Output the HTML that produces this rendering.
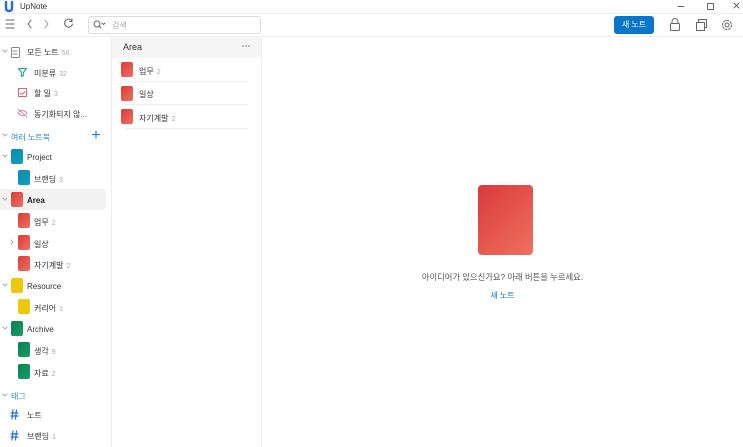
<!DOCTYPE html><html><head><meta charset="utf-8"><style>
*{margin:0;padding:0;box-sizing:border-box}
body{width:743px;height:447px;overflow:hidden;background:#fff;font-family:"Liberation Sans","Noto Sans CJK KR",sans-serif;font-size:8px;color:#333;position:relative}
.a{position:absolute}
.n{color:#aaa;font-size:7px;margin-left:3px}
.bk{position:absolute;width:12px;height:15px;border-radius:2px}
.r{background:linear-gradient(135deg,#d93a3a,#f07060)}
.b{background:linear-gradient(135deg,#0a89a8,#12a0c0)}
.y{background:#eec80c}
.g{background:linear-gradient(135deg,#0a8050,#13a068)}
.t{position:absolute;font-size:8px}
svg{position:absolute}
</style></head><body>
<svg style="left:0;top:0" width="743" height="447" fill="none" stroke-linecap="round" stroke-linejoin="round">
<path d="M6 2v6q0 3 3 3t3-3V2" stroke="#2a6fd8" stroke-width="2.5"/>
<path d="M678 6.5h6" stroke="#666"/><rect x="707.5" y="3.5" width="6" height="6" stroke="#666"/><path d="M734 3l5 5M739 3l-5 5" stroke="#666"/>
<path d="M6 20h8M6 24h8M6 28h8" stroke="#666"/>
<path d="M31 20l-3 4 3 4" stroke="#666"/><path d="M45 20l3 4-3 4" stroke="#999"/>
<path d="M72 21a4 4 0 1 0 0.5 3M72 19v2.5h-2.5" stroke="#666"/>
<circle cx="97" cy="24" r="3" stroke="#666"/><path d="M99 26l2 2M102 23l1.5 1.5 1.5-1.5" stroke="#666"/>
<rect x="670.5" y="23.5" width="9" height="7" rx="1" stroke="#666"/><path d="M672 23.5v-2a3 3 0 0 1 6 0v2" stroke="#666"/>
<rect x="698.5" y="19.5" width="8" height="8" stroke="#666"/><rect x="696.5" y="22.5" width="8" height="8" stroke="#666" fill="#fff"/>
<circle cx="727" cy="25" r="2" stroke="#666"/><circle cx="727" cy="25" r="4.5" stroke="#666" stroke-dasharray="2 1.5"/>
<g stroke="#aaa"><path d="M3 50l2 2 2-2M3 134l2 2 2-2M3 155l2 2 2-2M3 198l2 2 2-2M3 284l2 2 2-2M3 327l2 2 2-2M3 394l2 2 2-2M11 240l2 2-2 2"/></g>
<rect x="11.5" y="47.5" width="8" height="10" rx="1" stroke="#888"/><path d="M13 51h4M13 54h4" stroke="#888"/>
<path d="M18.5 68.5h8l-3 4v3l-2 1v-4z" stroke="#2aa89a" stroke-width="1.2"/>
<rect x="18.5" y="88.5" width="8" height="8" stroke="#d66"/><path d="M20 93l2 1.5 3-3" stroke="#d66"/>
<path d="M18 113q4-5 9 0q-4 5-9 0M18 109l9 8" stroke="#c8a"/>
<path d="M96 131v7M92.5 134.5h7" stroke="#2a86c8" stroke-width="1.2"/>
<g stroke="#2a6fd8" stroke-width="1.2"><path d="M11 413h7M11 416h7M13 410l-1 9M16.5 410l-1 9M11 434h7M11 437h7M13 431l-1 9M16.5 431l-1 9"/></g>
<circle cx="243" cy="46" r=".7" fill="#666"/><circle cx="246" cy="46" r=".7" fill="#666"/><circle cx="249" cy="46" r=".7" fill="#666"/>
</svg>
<div class="t" style="left:20px;top:2px">UpNote</div>
<div class="a" style="left:0;top:13px;width:743px;height:1px;background:#eee"></div>
<div class="a" style="left:88px;top:16px;width:173px;height:18px;border:1px solid #ddd;border-radius:3px"></div>
<div class="t" style="left:112px;top:20px;color:#aaa">검색</div>
<div class="a" style="left:614px;top:16px;width:40px;height:18px;background:#0a76c8;border-radius:3px;color:#fff;font-size:8px;text-align:center;line-height:18px">새 노트</div>
<div class="a" style="left:0;top:36px;width:743px;height:1px;background:#eee"></div>
<div class="a" style="left:111px;top:37px;width:1px;height:410px;background:#eee"></div>
<div class="a" style="left:261px;top:37px;width:1px;height:410px;background:#eee"></div>
<div class="t" style="left:27px;top:47px">모든 노트<span class="n">56</span></div>
<div class="t" style="left:34px;top:68px">미분류<span class="n">32</span></div>
<div class="t" style="left:34px;top:88px">할 일<span class="n">3</span></div>
<div class="t" style="left:34px;top:109px">동기화되지 않...</div>
<div class="t" style="left:11px;top:132px;color:#2a86c8">여러 노트북</div>
<div class="bk b" style="left:11px;top:149px"></div><div class="t" style="left:27px;top:153px">Project</div>
<div class="bk b" style="left:18px;top:170px"></div><div class="t" style="left:34px;top:174px">브랜딩<span class="n">3</span></div>
<div class="a" style="left:0;top:189px;width:106px;height:21px;background:#f2f2f2;border-radius:0 4px 4px 0"></div>
<svg style="left:0;top:189px" width="10" height="21" fill="none"><path d="M3 9l2 2 2-2" stroke="#aaa"/></svg>
<div class="bk r" style="left:11px;top:192px"></div><div class="t" style="left:27px;top:196px;font-weight:bold;color:#222">Area</div>
<div class="bk r" style="left:18px;top:213px"></div><div class="t" style="left:34px;top:217px">업무<span class="n">2</span></div>
<div class="bk r" style="left:18px;top:235px"></div><div class="t" style="left:34px;top:239px">일상</div>
<div class="bk r" style="left:18px;top:256px"></div><div class="t" style="left:34px;top:260px">자기계발<span class="n">2</span></div>
<div class="bk y" style="left:11px;top:278px"></div><div class="t" style="left:27px;top:282px">Resource</div>
<div class="bk y" style="left:18px;top:299px"></div><div class="t" style="left:34px;top:303px">커리어<span class="n">1</span></div>
<div class="bk g" style="left:11px;top:321px"></div><div class="t" style="left:27px;top:325px">Archive</div>
<div class="bk g" style="left:18px;top:342px"></div><div class="t" style="left:34px;top:346px">생각<span class="n">9</span></div>
<div class="bk g" style="left:18px;top:364px"></div><div class="t" style="left:34px;top:368px">자료<span class="n">2</span></div>
<div class="t" style="left:11px;top:391px;color:#2a86c8">태그</div>
<div class="t" style="left:27px;top:410px">노트</div>
<div class="t" style="left:27px;top:431px">브랜딩<span class="n">1</span></div>
<div class="a" style="left:112px;top:37px;width:149px;height:21px;background:#f5f5f5;z-index:-1"></div>
<div class="t" style="left:123px;top:42px;font-size:9px">Area</div>
<div class="bk r" style="left:121px;top:62px"></div><div class="t" style="left:139px;top:66px">업무<span class="n">2</span></div>
<div class="a" style="left:125px;top:81px;width:123px;height:1px;background:#eee"></div>
<div class="bk r" style="left:121px;top:86px"></div><div class="t" style="left:139px;top:89px">일상</div>
<div class="a" style="left:125px;top:104px;width:123px;height:1px;background:#eee"></div>
<div class="bk r" style="left:121px;top:109px"></div><div class="t" style="left:139px;top:113px">자기계발<span class="n">2</span></div>
<div class="a" style="left:125px;top:128px;width:123px;height:1px;background:#eee"></div>
<div class="a r" style="left:478px;top:185px;width:55px;height:70px;border-radius:4px"></div>
<div class="t" style="left:262px;top:271px;width:481px;text-align:center;color:#555;font-size:8.3px">아이디어가 있으신가요? 아래 버튼을 누르세요.</div>
<div class="t" style="left:262px;top:290px;width:481px;text-align:center;color:#0a76c8">새 노트</div>
</body></html>
